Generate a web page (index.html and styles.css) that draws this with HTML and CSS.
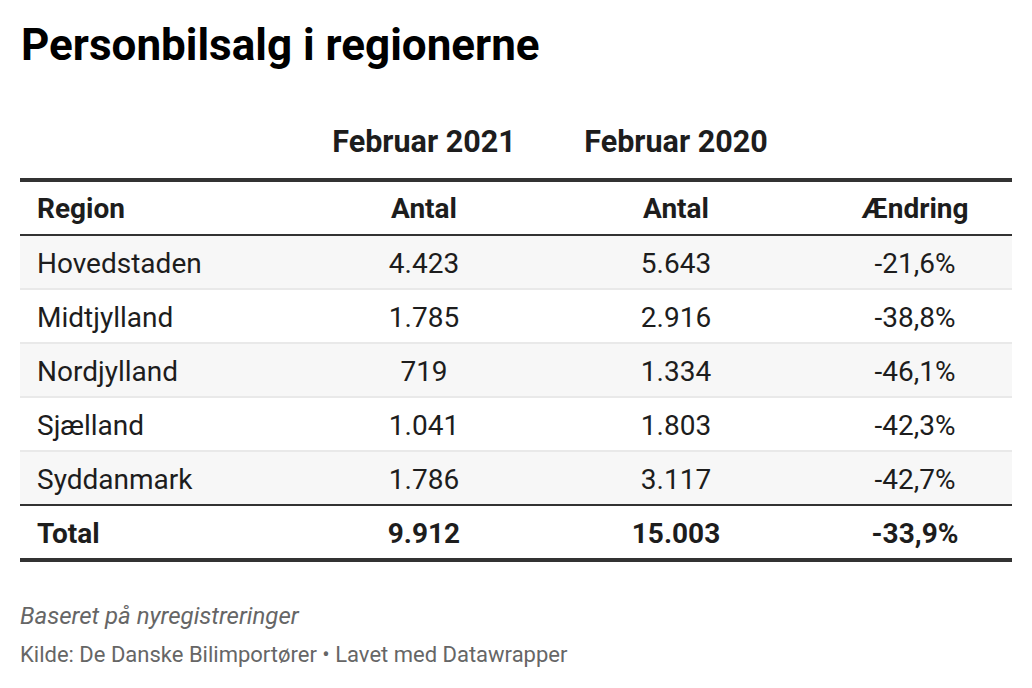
FILE: index.html
```html
<!DOCTYPE html>
<html lang="da">
<head>
<meta charset="utf-8">
<title>Personbilsalg i regionerne</title>
<link rel="stylesheet" href="styles.css">
</head>
<body>
<div class="chart">
  <h1 class="title">Personbilsalg i regionerne</h1>
  <div class="groups">
    <div class="group g1">Februar 2021</div>
    <div class="group g2">Februar 2020</div>
  </div>
  <table class="tbl">
    <thead>
      <tr>
        <th class="c1">Region</th>
        <th class="c2">Antal</th>
        <th class="c3">Antal</th>
        <th class="c4">Ændring</th>
      </tr>
    </thead>
    <tbody>
      <tr class="odd"><td class="c1">Hovedstaden</td><td class="c2">4.423</td><td class="c3">5.643</td><td class="c4">-21,6%</td></tr>
      <tr><td class="c1">Midtjylland</td><td class="c2">1.785</td><td class="c3">2.916</td><td class="c4">-38,8%</td></tr>
      <tr class="odd"><td class="c1">Nordjylland</td><td class="c2">719</td><td class="c3">1.334</td><td class="c4">-46,1%</td></tr>
      <tr><td class="c1">Sjælland</td><td class="c2">1.041</td><td class="c3">1.803</td><td class="c4">-42,3%</td></tr>
      <tr class="odd last"><td class="c1">Syddanmark</td><td class="c2">1.786</td><td class="c3">3.117</td><td class="c4">-42,7%</td></tr>
    </tbody>
    <tfoot>
      <tr><td class="c1">Total</td><td class="c2">9.912</td><td class="c3">15.003</td><td class="c4">-33,9%</td></tr>
    </tfoot>
  </table>
  <div class="notes">Baseret på nyregistreringer</div>
  <div class="source">Kilde: De Danske Bilimportører • Lavet med Datawrapper</div>
</div>
</body>
</html>
```
FILE: styles.css
```css
html, body {
  margin: 0;
  padding: 0;
  background: #ffffff;
}
body {
  font-family: Roboto, "Liberation Sans", sans-serif;
  color: #1d1d1d;
}
.chart {
  padding: 0 20px;
}
.title {
  margin: 18.5px 0 0 0;
  font-size: 44px;
  line-height: 52px;
  font-weight: 700;
  color: #000000;
  padding-left: 1px;
}
.groups {
  display: grid;
  grid-template-columns: 294px 220px 284px 194px;
  margin-top: 55px;
  padding-bottom: 20px;
}
.group {
  font-size: 30.5px;
  line-height: 32px;
  font-weight: 700;
  text-align: center;
  white-space: nowrap;
}
.g1 { grid-column: 2; }
.g2 { grid-column: 3; }
.tbl {
  width: 992px;
  border-collapse: collapse;
  table-layout: fixed;
  border-top: 4px solid #333333;
  border-bottom: 4px solid #333333;
}
.tbl th, .tbl td {
  font-size: 28px;
  line-height: 32px;
  padding: 0;
  text-align: center;
  white-space: nowrap;
}
.tbl .c1 { width: 277px; text-align: left; padding-left: 17px; }
.tbl .c2 { width: 220px; }
.tbl .c3 { width: 284px; }
.tbl .c4 { width: 194px; }
.tbl th {
  font-weight: 700;
  padding-top: 11px;
  padding-bottom: 9px;
  border-bottom: 2px solid #333333;
}
.tbl tbody td {
  padding-top: 12px;
  padding-bottom: 8px;
  border-bottom: 2px solid #e9e9e9;
}
.tbl tbody tr.odd td {
  background: #f7f7f7;
}
.tbl tbody tr.last td {
  border-bottom: 2px solid #333333;
}
.tbl tfoot td {
  font-weight: 700;
  padding-top: 12px;
  padding-bottom: 8px;
}
.notes {
  margin-top: 39px;
  font-size: 24px;
  line-height: 30px;
  font-style: italic;
  color: #666666;
}
.source {
  margin-top: 9.5px;
  font-size: 22px;
  line-height: 30px;
  color: #666666;
}
```
